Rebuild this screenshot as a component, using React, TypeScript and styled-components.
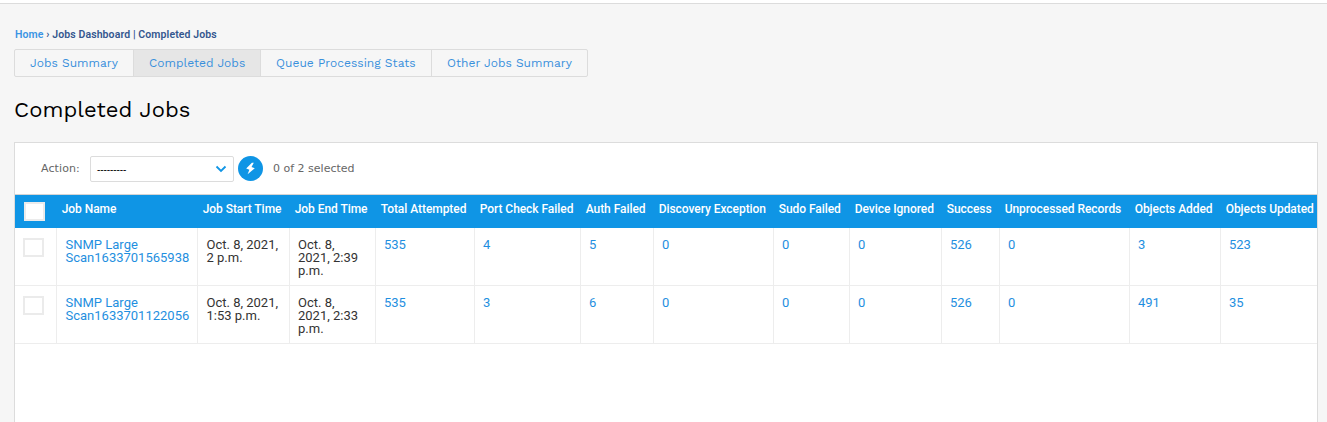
import React from 'react';
import styled, { createGlobalStyle } from 'styled-components';

const Global = createGlobalStyle`
  * { box-sizing: border-box; }
  html, body { margin: 0; height: 100%; overflow: hidden; background: #f6f6f6; }
  body { font-family: Roboto, "Liberation Sans", sans-serif; }
`;

const Page = styled.div`
  width: 1327px;
  height: 422px;
  overflow: hidden;
  display: flex;
  flex-direction: column;
`;

const TopBar = styled.div`
  flex: none;
  height: 4px;
  background: #fff;
  border-bottom: 1px solid #dcdcdc;
`;

const Main = styled.main`
  padding: 24px 9px 0 14px;
  display: flex;
  flex-direction: column;
  align-items: flex-start;
`;

const Breadcrumb = styled.nav`
  height: 21px;
  padding-left: 1px;
  font: 600 10.5px/14px Roboto, sans-serif;
  letter-spacing: 0.1px;
  color: #34568f;
  white-space: pre;
`;

const Crumb = styled.a`
  color: #3a94e4;
`;

const Tabs = styled.div`
  display: flex;
  height: 28px;
  border: 1px solid #dcdcdc;
  border-radius: 2px;
`;

const Tab = styled.a<{ $w: number; $active?: boolean }>`
  width: ${(p) => p.$w}px;
  padding-left: 15px;
  font: 400 12px/26px "Work Sans", Inter, sans-serif;
  letter-spacing: 0.03px;
  white-space: nowrap;
  color: #3a90dc;
  background: ${(p) => (p.$active ? '#e6e6e6' : 'transparent')};
  border-right: 1px solid #dcdcdc;
  &:last-child { border-right: 0; }
`;

const Title = styled.h1`
  margin: 18px 0 0;
  height: 47px;
  font: 400 22px/30px "Work Sans", Inter, sans-serif;
  letter-spacing: 0.05px;
  color: #000;
`;

const Panel = styled.section`
  width: 1304px;
  height: 300px;
  border: 1px solid #dcdcdc;
  background: #fff;
`;

const Toolbar = styled.div`
  display: flex;
  align-items: flex-start;
  height: 52px;
  padding: 13px 0 0 25px;
  border-bottom: 1px solid #d4d4d4;
  font: 400 11px/25px "DejaVu Sans", sans-serif;
  color: #666;
`;

const ActionLabel = styled.label`
  width: 50px;
  padding-left: 1px;
  letter-spacing: 0.1px;
`;

const Select = styled.div`
  display: flex;
  justify-content: space-between;
  align-items: center;
  width: 144px;
  height: 26px;
  padding: 0 6px;
  border: 1px solid #dcdcdc;
  border-radius: 2px;
  font: 400 10px/24px "Liberation Sans", sans-serif;
  color: #000;
`;

const Dashes = styled.span`
  padding-top: 2px;
  letter-spacing: -0.08px;
`;

const RunButton = styled.button`
  display: flex;
  align-items: center;
  justify-content: center;
  width: 25px;
  height: 25px;
  margin: 0 10px 0 4px;
  padding: 0;
  border: 0;
  border-radius: 50%;
  background: #0f95e5;
`;

const Count = styled.span`
  letter-spacing: 0;
`;

const Table = styled.table`
  width: 1302px;
  table-layout: fixed;
  border-collapse: separate;
  border-spacing: 0;
`;

const HeadCell = styled.th`
  height: 33px;
  padding: 7px 0 0 4.7px;
  vertical-align: top;
  text-align: left;
  white-space: nowrap;
  font: 500 12px/15px Roboto, sans-serif;
  letter-spacing: -0.05px;
  color: #fff;
  background: #0f95e5;
`;

const Cell = styled.td<{ $dark?: boolean }>`
  height: 58px;
  padding: 10px 0 0 8px;
  vertical-align: top;
  font: 400 13px/13px Roboto, sans-serif;
  color: ${(p) => (p.$dark ? '#333' : '#1f8fe0')};
  border-right: 1px solid #ededed;
  border-bottom: 1px solid #ededed;
  &:last-child { border-right: 0; }
`;

const CheckBox = styled.span<{ $head?: boolean }>`
  display: block;
  width: 21px;
  height: 19px;
  margin: ${(p) => (p.$head ? '0 0 0 4.3px' : '0')};
  background: #fff;
  border: 2px solid #ebebeb;
`;

const columns: [string, number][] = [
  ['Job Name', 141],
  ['Job Start Time', 92],
  ['Job End Time', 86],
  ['Total Attempted', 99],
  ['Port Check Failed', 106],
  ['Auth Failed', 73],
  ['Discovery Exception', 120],
  ['Sudo Failed', 76],
  ['Device Ignored', 92],
  ['Success', 58],
  ['Unprocessed Records', 130],
  ['Objects Added', 91],
  ['Objects Updated', 96],
];

const rows: string[][] = [
  ['SNMP Large\nScan1633701565938', 'Oct. 8, 2021,\n2 p.m.', 'Oct. 8,\n2021, 2:39\np.m.', '535', '4', '5', '0', '0', '0', '526', '0', '3', '523'],
  ['SNMP Large\nScan1633701122056', 'Oct. 8, 2021,\n1:53 p.m.', 'Oct. 8,\n2021, 2:33\np.m.', '535', '3', '6', '0', '0', '0', '526', '0', '491', '35'],
];

const Lines = styled.span<{ $indent: number }>`
  display: block;
  padding-left: ${(p) => p.$indent}px;
  white-space: pre;
`;

export default function App() {
  return (
    <Page>
      <Global />
      <TopBar />
      <Main>
        <Breadcrumb>
          <Crumb>Home</Crumb> › Jobs Dashboard | Completed Jobs
        </Breadcrumb>
        <Tabs>
          <Tab $w={119}>Jobs Summary</Tab>
          <Tab $w={127} $active>Completed Jobs</Tab>
          <Tab $w={171}>Queue Processing Stats</Tab>
          <Tab $w={155}>Other Jobs Summary</Tab>
        </Tabs>
        <Title>Completed Jobs</Title>
        <Panel>
          <Toolbar>
            <ActionLabel>Action:</ActionLabel>
            <Select>
              <Dashes>---------</Dashes>
              <svg width="12" height="8" viewBox="0 0 12 8" fill="none">
                <path d="M1.5 1.5L6 6L10.5 1.5" stroke="#0f95e5" strokeWidth="1.8" />
              </svg>
            </Select>
            <RunButton aria-label="Run">
              <svg width="11" height="13" viewBox="0 0 11 13">
                <path d="M6.9 0.8L1.2 6.4L4.4 7.8L2.6 12.2L9.8 6.2L6.5 4.9L8.8 0.8Z" fill="#fff" />
              </svg>
            </RunButton>
            <Count>0 of 2 selected</Count>
          </Toolbar>
          <Table>
            <colgroup>
              <col width={42} />
              {columns.map(([name, w]) => (
                <col key={name} width={w} />
              ))}
            </colgroup>
            <thead>
              <tr>
                <HeadCell>
                  <CheckBox $head />
                </HeadCell>
                {columns.map(([name]) => (
                  <HeadCell key={name}>{name}</HeadCell>
                ))}
              </tr>
            </thead>
            <tbody>
              {rows.map((row, r) => (
                <tr key={r}>
                  <Cell>
                    <CheckBox />
                  </Cell>
                  {row.map((value, i) => (
                    <Cell key={i} $dark={i === 1 || i === 2}>
                      <Lines $indent={i < 2 ? 0.5 : 0}>{value}</Lines>
                    </Cell>
                  ))}
                </tr>
              ))}
            </tbody>
          </Table>
        </Panel>
      </Main>
    </Page>
  );
}
